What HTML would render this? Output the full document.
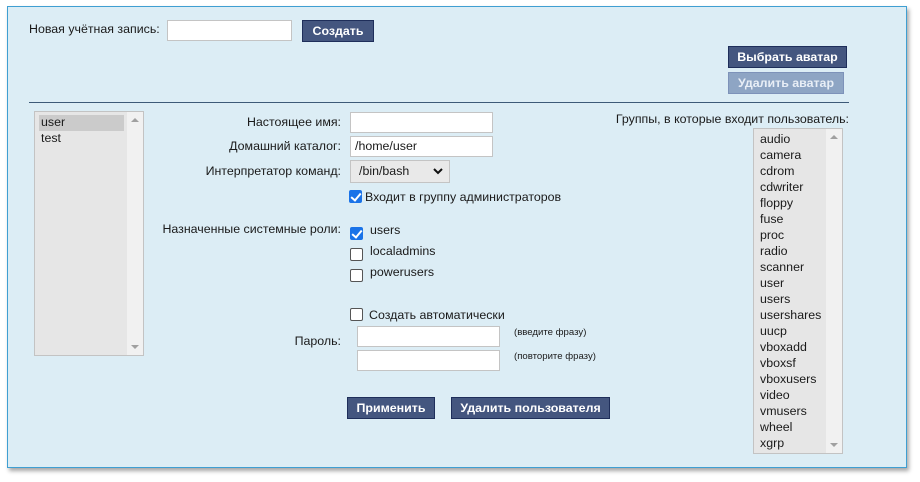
<!DOCTYPE html>
<html><head><meta charset="utf-8"><style>
*{box-sizing:border-box;margin:0;padding:0}
body{width:920px;height:482px;background:#fff;font-family:"Liberation Sans","DejaVu Sans",sans-serif;font-size:12.4px;color:#1a1a1a;position:relative;overflow:hidden}
.panel{position:absolute;left:7px;top:6px;width:900px;height:462px;background:#dcedf5;border:1px solid #3f9fd2;box-shadow:2px 3px 4px rgba(0,0,0,.35)}
.a{position:absolute;white-space:nowrap}
.inp{position:absolute;background:#fff;border:1px solid #c4c4c4;padding:0 4px;line-height:19px}
.btn{position:absolute;background:#44567f;border:1px solid #1e2e5a;color:#fff;font-weight:bold;text-align:center;line-height:20px}
.btn.dis{background:#8ea5c4;border-color:#7d92b9;color:#e8eef6}
.cb{position:absolute;width:13px;height:13px;border:1px solid #555;border-radius:2px;background:#fff}
.cb.on{background:#1a73e8;border-color:#1a73e8}
.cb.on:after{content:"";position:absolute;left:3px;top:0px;width:4px;height:8px;border:solid #fff;border-width:0 2px 2px 0;transform:rotate(40deg)}
.list{position:absolute;background:#e6e6e6;border:1px solid #c3c3c3}
.sb{position:absolute;right:0;top:0;bottom:0;width:16px;background:#f1f1f1}
.up{position:absolute;left:4px;top:6px;border:4px solid transparent;border-bottom:4px solid #a0a0a0;border-top:0}
.dn{position:absolute;left:4px;bottom:6px;border:4px solid transparent;border-top:4px solid #a0a0a0;border-bottom:0}
.r{text-align:right}
</style></head><body>
<div class="panel"></div>
<div class="a" style="left:29px;top:22px">Новая учётная запись:</div>
<div class="inp" style="left:167px;top:20px;width:125px;height:21px"></div>
<div class="btn" style="left:302px;top:20px;width:72px;height:22px">Создать</div>
<div class="btn" style="left:728px;top:46px;width:119px;height:22px">Выбрать аватар</div>
<div class="btn dis" style="left:728px;top:72px;width:116px;height:22px">Удалить аватар</div>
<div class="a" style="left:29px;top:102px;width:820px;height:1px;background:#3d5a78"></div>

<div class="list" style="left:34px;top:111px;width:110px;height:245px">
<div class="a" style="left:4px;top:3px;width:85px;height:16px;background:#cbcbcb"></div>
<div class="a" style="left:6px;top:2px;line-height:16px">user<br>test</div>
<div class="sb"><div class="up"></div><div class="dn"></div></div>
</div>

<div class="a r" style="left:150px;width:191px;top:115px">Настоящее имя:</div>
<div class="inp" style="left:350px;top:112px;width:143px;height:21px"></div>
<div class="a r" style="left:150px;width:191px;top:139px">Домашний каталог:</div>
<div class="inp" style="left:350px;top:136px;width:143px;height:21px">/home/user</div>
<div class="a r" style="left:150px;width:191px;top:164px">Интерпретатор команд:</div>
<div class="a" style="left:350px;top:160px;width:100px;height:23px;background:#e9e9e9;border:1px solid #c4c4c4;padding-left:8px;line-height:21px">/bin/bash<svg style="position:absolute;right:6px;top:7px" width="10" height="7" viewBox="0 0 10 7"><path d="M1 1l4 4 4-4" fill="none" stroke="#111" stroke-width="2"/></svg></div>
<div class="cb on" style="left:349px;top:190px"></div>
<div class="a" style="left:365px;top:190px">Входит в группу администраторов</div>

<div class="a r" style="left:150px;width:191px;top:222px">Назначенные системные роли:</div>
<div class="cb on" style="left:350px;top:227px"></div>
<div class="a" style="left:370px;top:223px">users</div>
<div class="cb" style="left:350px;top:248px"></div>
<div class="a" style="left:370px;top:244px">localadmins</div>
<div class="cb" style="left:350px;top:269px"></div>
<div class="a" style="left:370px;top:265px">powerusers</div>

<div class="cb" style="left:350px;top:308px"></div>
<div class="a" style="left:369px;top:308px">Создать автоматически</div>
<div class="a r" style="left:250px;width:91px;top:334px">Пароль:</div>
<div class="inp" style="left:357px;top:326px;width:143px;height:21px"></div>
<div class="inp" style="left:357px;top:350px;width:143px;height:21px"></div>
<div class="a" style="left:514px;top:327px;font-size:9.6px">(введите фразу)</div>
<div class="a" style="left:514px;top:351px;font-size:9.6px">(повторите фразу)</div>

<div class="btn" style="left:347px;top:397px;width:88px;height:22px">Применить</div>
<div class="btn" style="left:451px;top:397px;width:159px;height:22px">Удалить пользователя</div>

<div class="a r" style="left:560px;width:289px;top:112px">Группы, в которые входит пользователь:</div>
<div class="list" style="left:753px;top:128px;width:90px;height:326px">
<div class="a" style="left:6px;top:2px;line-height:16px">audio<br>camera<br>cdrom<br>cdwriter<br>floppy<br>fuse<br>proc<br>radio<br>scanner<br>user<br>users<br>usershares<br>uucp<br>vboxadd<br>vboxsf<br>vboxusers<br>video<br>vmusers<br>wheel<br>xgrp</div>
<div class="sb"><div class="up"></div><div class="dn"></div></div>
</div>
</body></html>
